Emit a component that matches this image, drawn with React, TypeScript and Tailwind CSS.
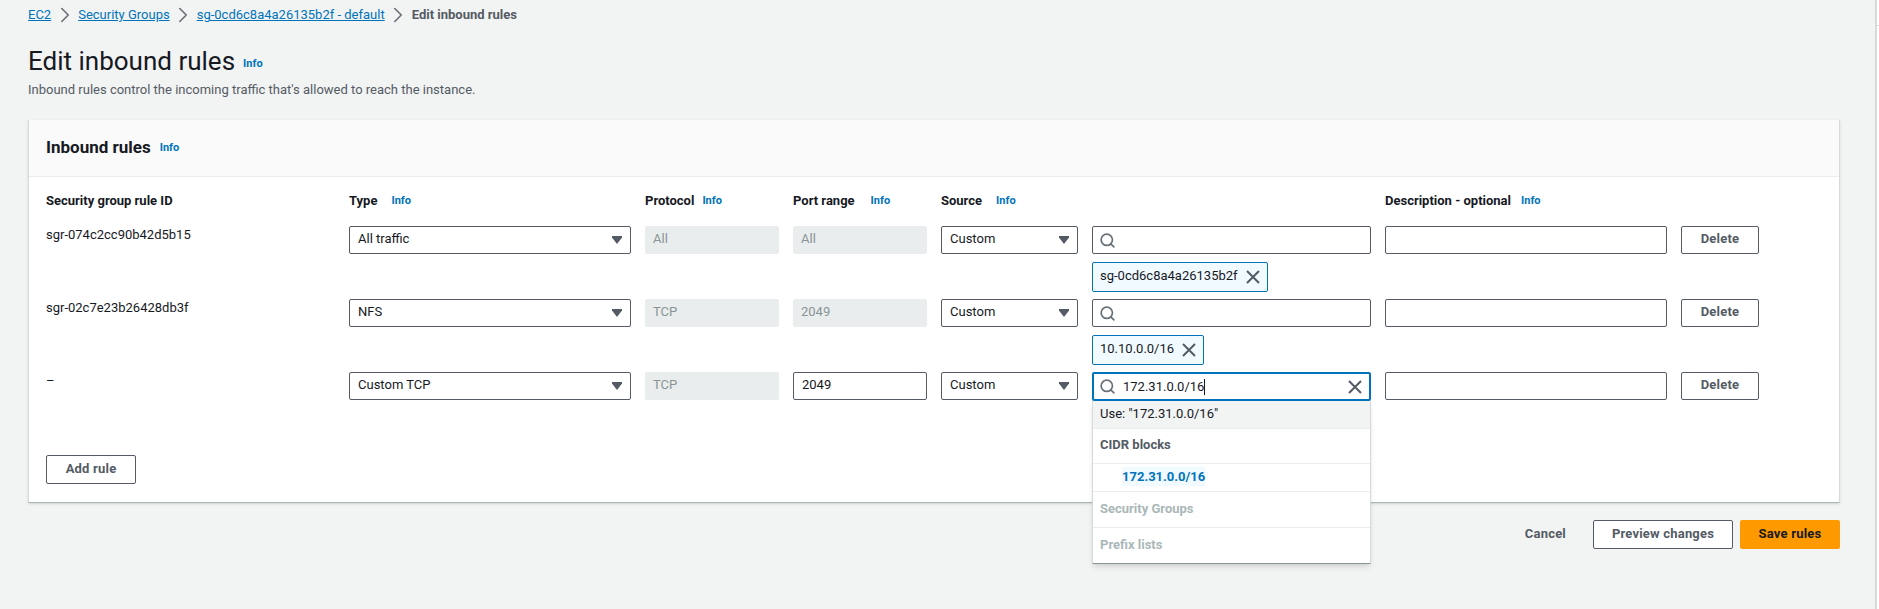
import { ChevronRight, Search } from 'lucide-react'

const labelClass = "text-[13px] font-bold text-[#16191f] leading-[20px]"
const infoClass = "text-[11px] font-bold text-[#0073bb] leading-[20px]"
const boxClass = "h-[28px] w-full border border-[#545b64] rounded-[2px] bg-white flex items-center px-[8px] pb-[2px] text-[13px] text-[#16191f]"
const buttonClass = "border border-[#545b64] rounded-[2px] bg-white pb-[2px] text-[13px] font-bold tracking-[0.2px] text-[#545b64]"
const menuRowClass = "border-b border-[#eaeded] flex items-center pb-[2px]"

const InfoLabel = ({ text, gap }: { text: string; gap: string }) => (
  <div className={`flex items-center self-start ${gap}`}>
    <span className={labelClass}>{text}</span>
    <span className={infoClass}>Info</span>
  </div>
)

const CloseIcon = () => (
  <svg width="14" height="14" viewBox="0 0 14 14" className="shrink-0">
    <path d="M1 1l12 12M13 1L1 13" stroke="#545b64" strokeWidth="2" fill="none" />
  </svg>
)

const SelectBox = ({ value }: { value: string }) => (
  <div className={`${boxClass} justify-between`}>
    <span>{value}</span>
    <svg width="10" height="8" viewBox="0 0 10 8" className="mt-[2px] shrink-0">
      <path d="M0 0h10v1.5L5 8 0 1.5z" fill="#545b64" />
    </svg>
  </div>
)

const Disabled = ({ value }: { value: string }) => (
  <div className="h-[28px] w-full rounded-[2px] bg-[#eaeded] flex items-center px-[8px] pb-[2px] text-[13px] text-[#879596]">{value}</div>
)

const Tag = ({ value }: { value: string }) => (
  <div className="mt-[8px] h-[30px] w-fit border border-[#0073bb] rounded-[2px] bg-[#f1faff] flex items-center pl-[7px] pr-[7px] gap-[8px] text-[13px] text-[#16191f]">
    <span className="pb-[2px]">{value}</span>
    <CloseIcon />
  </div>
)

const SearchBox = ({ tag }: { tag: string }) => (
  <div>
    <div className={boxClass}>
      <Search size={17} strokeWidth={2.4} className="text-[#687078] -ml-[2px] mt-[2px]" />
    </div>
    <Tag value={tag} />
  </div>
)

const DeleteButton = () => (
  <button className={`h-[28px] w-full ${buttonClass}`}>Delete</button>
)

const Crumb = ({ text }: { text: string }) => (
  <>
    <a className="text-[#0073bb] underline">{text}</a>
    <ChevronRight size={26} strokeWidth={1.5} className="mx-[0.5px] text-[#687078]" />
  </>
)

const rules = [
  { id: "sgr-074c2cc90b42d5b15", type: "All traffic", protocol: "All", port: "All", tag: "sg-0cd6c8a4a26135b2f" },
  { id: "sgr-02c7e23b26428db3f", type: "NFS", protocol: "TCP", port: "2049", tag: "10.10.0.0/16" },
]

export default function App() {
  return (
    <div className="flex h-[609px] w-[1879px] overflow-hidden bg-white font-['Roboto',sans-serif]">
      <main className="w-[1875px] shrink-0 bg-[#f2f3f3] pt-[5px] pl-[28px]">
        <div className="w-[1812px]">
          <nav className="flex items-center h-[20px] text-[13px]">
            <Crumb text="EC2" />
            <Crumb text="Security Groups" />
            <Crumb text="sg-0cd6c8a4a26135b2f - default" />
            <span className="font-bold text-[#545b64]">Edit inbound rules</span>
          </nav>

          <div className="flex items-center gap-[8px] h-[34px] mt-[19px]">
            <h1 className="text-[26px] text-[#16191f] leading-[34px]">Edit inbound rules</h1>
            <span className={`${infoClass} mt-[5px]`}>Info</span>
          </div>
          <p className="text-[13px] text-[#545b64] leading-[20px] mt-[2px]">Inbound rules control the incoming traffic that's allowed to reach the instance.</p>

          <section className="mt-[20px] bg-white border-l border-l-[#d5dbdb] border-r border-r-[#d5dbdb] border-b border-b-[#aab7b8] shadow-sm h-[383px]">
            <div className="h-[57px] bg-[#fafafa] border-b border-[#eaeded] flex items-center gap-[9px] pl-[17px]">
              <h2 className="text-[17px] font-bold text-[#16191f]">Inbound rules</h2>
              <span className={infoClass}>Info</span>
            </div>
            <div className="pl-[17px] pt-[14px]">
              <div className="grid grid-cols-[289px_282px_134px_134px_137px_279px_282px_78px] gap-x-[14px] gap-y-[7px] text-[13px]">
                <span className={`${labelClass} mb-[8px]`}>Security group rule ID</span>
                <InfoLabel text="Type" gap="gap-[14px]" />
                <InfoLabel text="Protocol" gap="gap-[8px]" />
                <InfoLabel text="Port range" gap="gap-[16px]" />
                <InfoLabel text="Source" gap="gap-[14px]" />
                <span />
                <InfoLabel text="Description - optional" gap="gap-[10px]" />
                <span />

                {rules.map((rule) => (
                  <div key={rule.id} className="contents">
                    <span className="text-[#16191f] leading-[18px]">{rule.id}</span>
                    <SelectBox value={rule.type} />
                    <Disabled value={rule.protocol} />
                    <Disabled value={rule.port} />
                    <SelectBox value="Custom" />
                    <SearchBox tag={rule.tag} />
                    <div className={boxClass} />
                    <DeleteButton />
                  </div>
                ))}

                <span className="text-[#16191f] leading-[18px]">–</span>
                <SelectBox value="Custom TCP" />
                <Disabled value="TCP" />
                <div className={boxClass}>2049</div>
                <SelectBox value="Custom" />
                <div className="relative">
                  <div className="h-[29px] border-2 border-[#0073bb] rounded-[2px] bg-white flex items-center pl-[6px] pr-[7px] text-[13px] text-[#16191f]">
                    <Search size={17} strokeWidth={2.4} className="text-[#687078] shrink-0 -ml-[1px]" />
                    <span className="ml-[7px] border-r border-[#16191f] leading-[16px]">172.31.0.0/16</span>
                    <span className="ml-auto"><CloseIcon /></span>
                  </div>
                  <div className="absolute z-10 left-0 top-[29px] w-full h-[163px] bg-white border-x border-x-[#d5dbdb] border-b border-b-[#879596] shadow-md text-[13px]">
                    <div className={`h-[28px] bg-[#f2f3f3] pl-[7px] text-[#16191f] ${menuRowClass}`}>Use: "172.31.0.0/16"</div>
                    <div className={`h-[35px] pl-[7px] font-bold text-[#545b64] ${menuRowClass}`}>CIDR blocks</div>
                    <div className={`h-[28px] pl-[29px] ${menuRowClass}`}>
                      <span className="bg-[#f1faff] font-bold text-[#0073bb]">172.31.0.0/16</span>
                    </div>
                    <div className={`h-[36px] pl-[7px] font-bold text-[#aab7b8] ${menuRowClass}`}>Security Groups</div>
                    <div className="h-[35px] flex items-center pl-[7px] pb-[2px] font-bold text-[#aab7b8]">Prefix lists</div>
                  </div>
                </div>
                <div className={boxClass} />
                <DeleteButton />
              </div>
              <button className={`mt-[54px] h-[29px] w-[90px] ${buttonClass}`}>Add rule</button>
            </div>
          </section>

          <div className="mt-[17px] flex items-center justify-end">
            <button className="pb-[2px] text-[13px] font-bold tracking-[0.2px] text-[#545b64] mr-[27px]">Cancel</button>
            <button className={`h-[29px] w-[140px] ${buttonClass} mr-[7px]`}>Preview changes</button>
            <button className="h-[29px] w-[100px] rounded-[2px] bg-[#ff9900] pb-[2px] text-[13px] font-bold tracking-[0.2px] text-[#16191f]">Save rules</button>
          </div>
        </div>
      </main>
      <aside className="w-[4px] border-l-2 border-l-[#d5dbdb] pt-[25px]">
        <div className="h-[1px] bg-[#d5dbdb]" />
      </aside>
    </div>
  )
}
